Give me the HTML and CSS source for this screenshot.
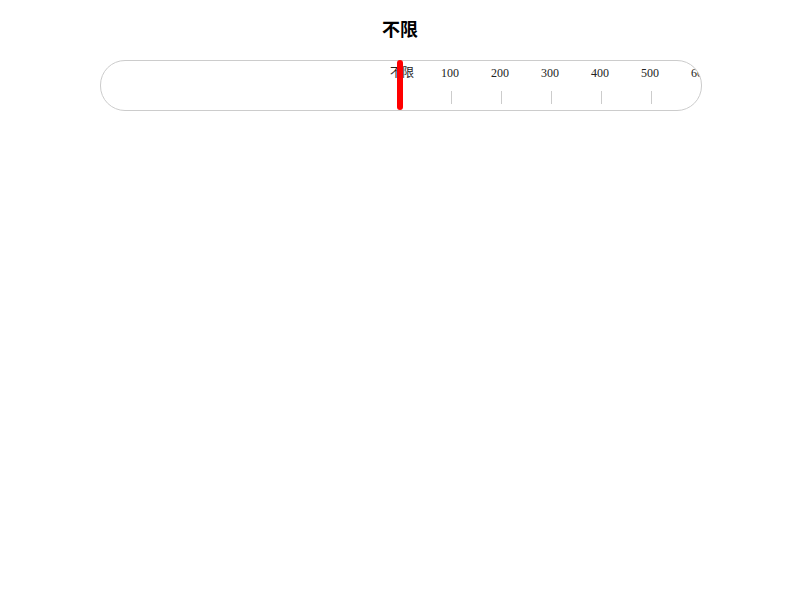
FILE: index.html
```html
<!DOCTYPE html>
<html lang="zh">
<head>
<meta charset="utf-8">
<title>不限</title>
<link rel="stylesheet" href="styles.css">
</head>
<body>
  <h1 class="title">不限</h1>
  <div class="ruler">
    <div class="track">
      <div class="scale">
        <div class="mark mark-first"><span class="label">不限</span></div>
        <div class="mark"><span class="label">100</span><span class="tick"></span></div>
        <div class="mark"><span class="label">200</span><span class="tick"></span></div>
        <div class="mark"><span class="label">300</span><span class="tick"></span></div>
        <div class="mark"><span class="label">400</span><span class="tick"></span></div>
        <div class="mark"><span class="label">500</span><span class="tick"></span></div>
        <div class="mark"><span class="label">600</span><span class="tick"></span></div>
      </div>
    </div>
    <div class="pointer"></div>
  </div>
</body>
</html>
```
FILE: styles.css
```css
html, body {
  margin: 0;
  padding: 0;
  background: #fff;
}
body {
  width: 800px;
  font-family: "Liberation Serif", "Noto Sans CJK SC", serif;
}
.title {
  margin: 0;
  padding-top: 18px;
  height: 24px;
  line-height: 24px;
  text-align: center;
  font-family: "Liberation Sans", "Noto Sans CJK SC", sans-serif;
  font-size: 18px;
  font-weight: bold;
  color: #000;
}
.ruler {
  position: relative;
  margin: 18px 0 0 100px;
  width: 602px;
  height: 51px;
}
.track {
  height: 51px;
  box-sizing: border-box;
  border: 1px solid #ccc;
  border-radius: 25px;
  overflow: hidden;
}
.scale {
  display: flex;
  padding-left: 274px;
  padding-top: 5px;
  white-space: nowrap;
}
.mark {
  flex: 0 0 50px;
  display: flex;
  flex-direction: column;
  align-items: center;
}
.label {
  display: block;
  height: 14px;
  line-height: 14px;
  font-size: 12px;
  color: #222;
}
.mark-first .label {
  padding-left: 4px;
}
.tick {
  display: block;
  margin-top: 11px;
  margin-left: 2px;
  width: 1px;
  height: 13px;
  background: #ccc;
}
.pointer {
  position: absolute;
  left: 297px;
  top: 0;
  width: 6px;
  height: 50px;
  border-radius: 3px;
  background: #f00;
}
```
